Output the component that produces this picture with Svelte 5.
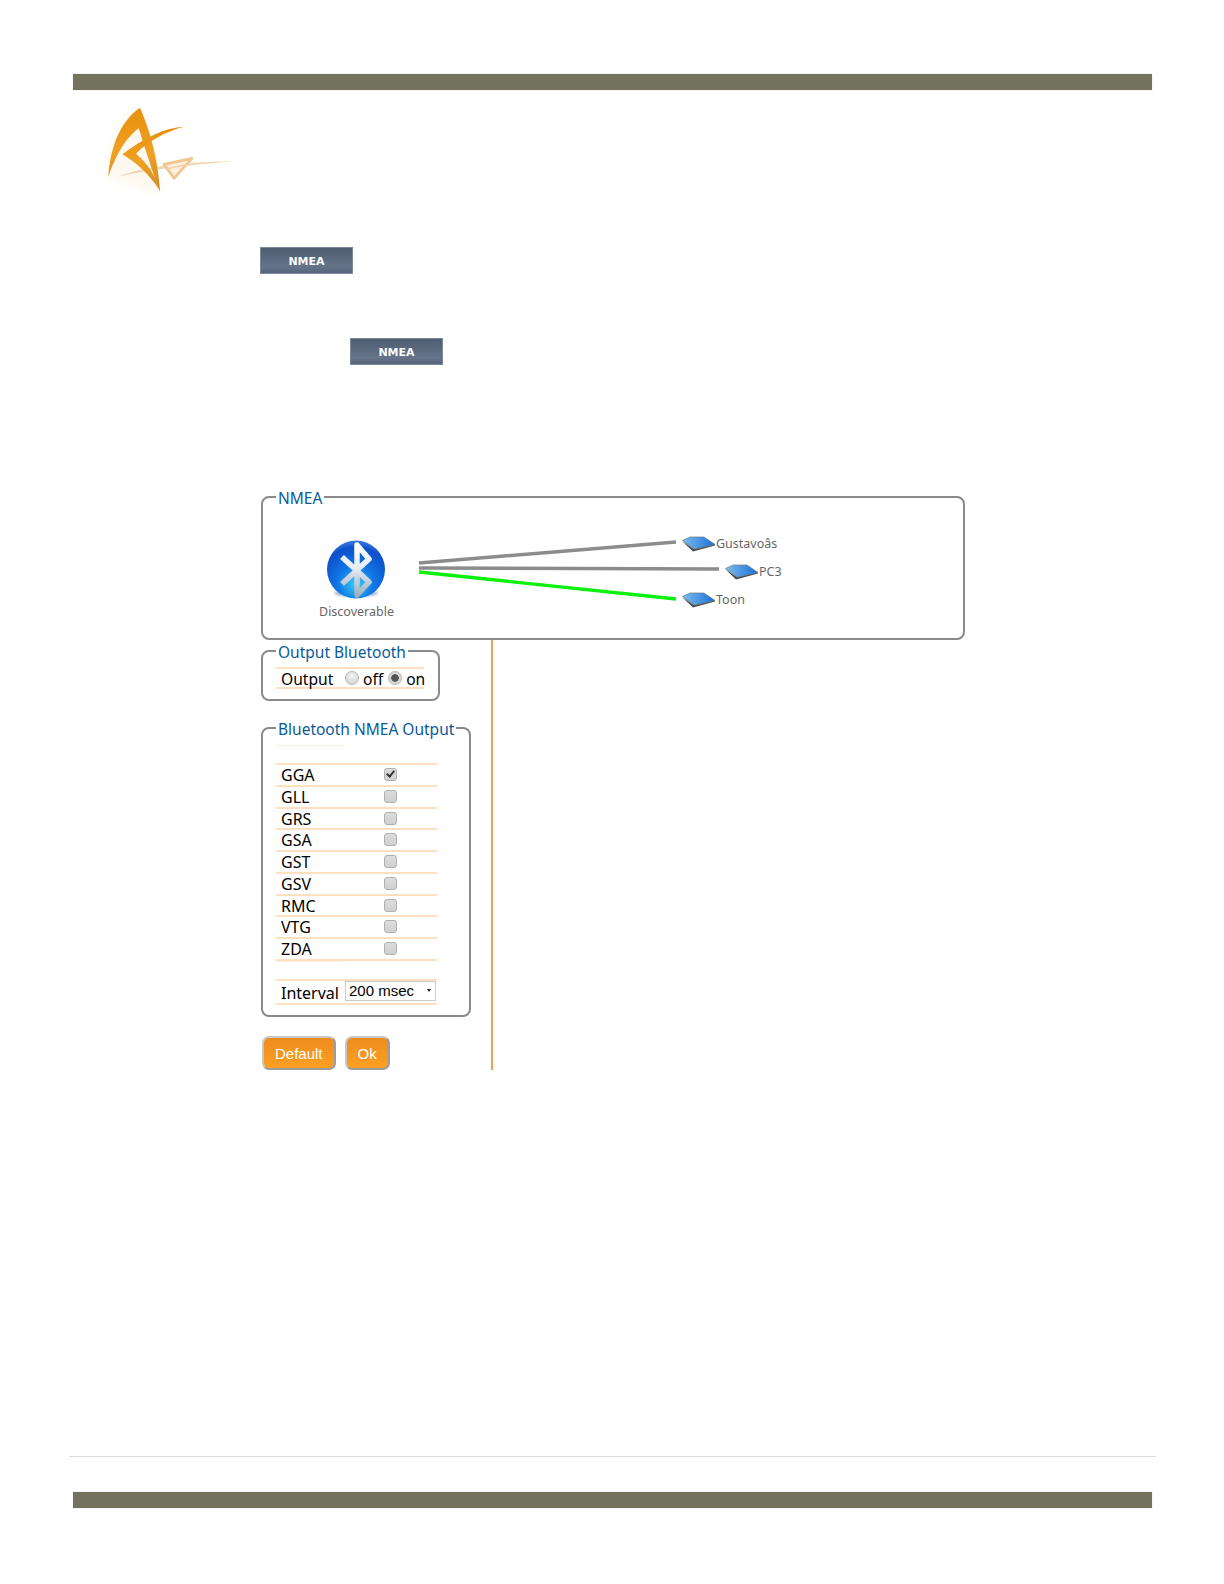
<script lang="ts">
  const sentences = ['GGA', 'GLL', 'GRS', 'GSA', 'GST', 'GSV', 'RMC', 'VTG', 'ZDA'];
  const enabled = ['GGA'];

  // diagram canvas is relative to the NMEA fieldset's inner box
  const devices = [
    { name: 'Gustavoâs', x: 406, y: 36 },
    { name: 'PC3', x: 449, y: 64 },
    { name: 'Toon', x: 406, y: 92 }
  ];
  const links = [
    { x1: 143, y1: 54, x2: 400, y2: 33, color: '#8c8c8c' },
    { x1: 143, y1: 59, x2: 443, y2: 60, color: '#8c8c8c' },
    { x1: 143, y1: 63, x2: 400, y2: 90, color: '#0cf00c' }
  ];
</script>

<div class="page">
  <div class="bar"></div>

  <svg class="logo" viewBox="0 0 480 330" width="160" height="110" aria-label="logo">
    <defs>
      <filter id="soft"><feGaussianBlur stdDeviation="1.8" /></filter>
      <filter id="haze"><feGaussianBlur stdDeviation="10" /></filter>
      <linearGradient id="gold" x1="0" y1="0" x2="0" y2="1">
        <stop offset="0" stop-color="#e8900e" />
        <stop offset="0.55" stop-color="#f0a024" />
        <stop offset="1" stop-color="#cf8a22" />
      </linearGradient>
    </defs>
    <g filter="url(#haze)" opacity="0.2">
      <path d="M150 30 C90 70 50 150 50 250 L215 300 C205 200 185 110 150 30Z" fill="#fbe3b8" />
    </g>
    <g filter="url(#soft)">
      <path d="M85 245 C170 210 300 202 432 198 C300 212 180 222 85 245Z" fill="#f0d8b6" />
      <path d="M306 190 L222 208 L252 250 Z" fill="#fbeedd" stroke="#f0c68e" stroke-width="8" stroke-linejoin="round" />
      <path d="M226 222 L296 208" stroke="#f0d0a4" stroke-width="4" />
      <path d="M150 38 C100 72 62 140 55 245 C80 172 112 125 146 100 C162 150 185 225 210 290 C206 215 188 125 150 38Z" fill="url(#gold)" />
      <path d="M282 95 C225 98 165 126 97 178 C142 205 180 240 210 288 C196 238 172 205 138 176 C172 140 225 110 282 95Z" fill="url(#gold)" />
    </g>
  </svg>

  <div class="tab first">NMEA</div>
  <div class="tab second">NMEA</div>

  <main class="content">
    <fieldset class="box diagram">
      <legend>NMEA</legend>
      <div class="canvas">
        <svg class="links" width="690" height="120" aria-hidden="true">
          {#each links as l}
            <line x1={l.x1} y1={l.y1} x2={l.x2} y2={l.y2} stroke={l.color} stroke-width="3.4" />
          {/each}
        </svg>

        <div class="hub">
          <svg viewBox="0 0 120 80" width="120" height="80" aria-hidden="true">
            <defs>
              <radialGradient id="ball" cx="0.5" cy="0.75" r="0.75">
                <stop offset="0" stop-color="#37d0f7" />
                <stop offset="0.4" stop-color="#1079e6" />
                <stop offset="0.85" stop-color="#0d4fcb" />
                <stop offset="1" stop-color="#3c80e4" />
              </radialGradient>
              <linearGradient id="rune" x1="0" y1="0" x2="0" y2="1">
                <stop offset="0" stop-color="#ffffff" />
                <stop offset="0.45" stop-color="#e6ecf4" />
                <stop offset="1" stop-color="#9fb2c2" />
              </linearGradient>
              <filter id="shade"><feGaussianBlur stdDeviation="1.5" /></filter>
            </defs>
            <ellipse cx="56" cy="63" rx="22" ry="3.5" fill="#5d7ea8" opacity="0.6" filter="url(#shade)" />
            <circle cx="56" cy="39.5" r="29" fill="url(#ball)" />
            <path d="M42 27 L69 52 L57 65 L57 15 L69 29 L42 54" fill="none" stroke="url(#rune)" stroke-width="5.5" stroke-linejoin="round" />
          </svg>
          <span>Discoverable</span>
        </div>

        {#each devices as d}
          <div class="device" style="left: {d.x}px; top: {d.y}px">
            <svg viewBox="0 0 33 16" width="33" height="16" aria-hidden="true">
              <defs>
                <linearGradient id="screen-{d.name}" x1="0" y1="0" x2="1" y2="0">
                  <stop offset="0" stop-color="#7fbcec" />
                  <stop offset="1" stop-color="#1670d8" />
                </linearGradient>
              </defs>
              <path d="M0 5 L11 15.5 L33 9.5 L33 8 L12 13 Z" fill="#4e4e4e" />
              <path d="M0.5 4.5 L8 1 L22 1 L33 8.5 L12 13 Z" fill="url(#screen-{d.name})" stroke="#6a7884" stroke-width="0.7" />
            </svg>
            <span>{d.name}</span>
          </div>
        {/each}
      </div>
    </fieldset>

    <div class="lower">
      <fieldset class="box output">
        <legend>Output Bluetooth</legend>
        <div class="output-row">
          <span class="output-label">Output</span>
          <label class="choice"><input type="radio" name="bt" /> off</label>
          <label class="choice"><input type="radio" name="bt" checked /> on</label>
        </div>
      </fieldset>

      <fieldset class="box sentences">
        <legend>Bluetooth NMEA Output</legend>
        <div class="grid">
          <div class="cell spacer"></div>
          <div class="cell blank"></div>
          {#each sentences as s}
            <div class="cell name">{s}</div>
            <div class="cell check"><input type="checkbox" checked={enabled.includes(s)} /></div>
          {/each}
          <div class="cell spacer"></div>
          <div class="cell blank"></div>
          <div class="cell name interval">Interval</div>
          <div class="cell interval">
            <span class="select">
              <select>
                <option>200 msec</option>
                <option>500 msec</option>
                <option>1000 msec</option>
              </select>
            </span>
          </div>
        </div>
      </fieldset>

      <div class="actions">
        <button type="button">Default</button>
        <button type="button">Ok</button>
      </div>
    </div>
  </main>

  <footer>
    <div class="rule"></div>
    <div class="bar"></div>
  </footer>
</div>

<style>
  :global(body) {
    margin: 0;
    background: #fff;
  }

  .page {
    width: 1224px;
    height: 1584px;
    box-sizing: border-box;
    padding-top: 74px;
    font-family: Tahoma, "Noto Sans", sans-serif;
    color: #000;
    overflow: hidden;
  }

  .bar {
    height: 16px;
    margin: 0 72px 0 73px;
    background: #73735d;
    box-shadow: 0 0 1px #c9c9b4;
  }

  .logo {
    display: block;
    margin: 5px 0 0 90px;
  }

  .tab {
    width: 93px;
    height: 27px;
    box-sizing: border-box;
    display: flex;
    align-items: center;
    justify-content: center;
    padding-top: 2px;
    border: 1px solid #7d8a9b;
    background: linear-gradient(#4f5d70, #65748a 75%, #55647a);
    color: #fff;
    font: bold 11px "DejaVu Sans", sans-serif;
  }

  .tab.first {
    margin: 42px 0 0 260px;
  }

  .tab.second {
    margin: 64px 0 0 350px;
  }

  .content {
    margin: 119px 0 0 261px;
  }

  .box {
    margin: 0;
    padding: 0 11px 0 13px;
    border: 2px solid #8a8a8a;
    border-radius: 8px;
    box-sizing: border-box;
  }

  legend {
    margin-left: 0;
    padding: 2px 2px 0;
    color: #0a5a9a;
    font-size: 15.5px;
    line-height: 22px;
    white-space: nowrap;
  }

  .diagram {
    width: 704px;
    height: 156px;
  }

  /* NMEA sits one pixel lower on its border than the two smaller legends */
  .diagram legend {
    padding-top: 3px;
  }

  .canvas {
    position: relative;
    height: 120px;
  }

  .links {
    position: absolute;
    left: 0;
    top: 0;
  }

  .hub {
    position: absolute;
    left: 24px;
    top: 21px;
    width: 112px;
    color: #666;
    font-size: 12.5px;
    text-align: center;
  }

  .hub svg {
    display: block;
    margin-bottom: -7px;
  }

  .hub span {
    display: block;
    padding-left: 1px;
  }

  .device {
    position: absolute;
    display: flex;
    align-items: center;
    gap: 1px;
    transform: translateY(-9px);
    color: #666;
    font-size: 12.5px;
    line-height: 16px;
  }

  .device svg {
    flex: none;
  }

  .lower {
    width: 232px;
    height: 430px;
    box-sizing: border-box;
    border-right: 2px solid #ee9f55;
    padding-top: 1px;
  }

  .output {
    width: 179px;
    height: 62px;
    margin-top: -2px;
  }

  .output-row {
    display: flex;
    align-items: center;
    height: 22px;
    margin-top: 4px;
    width: 148px;
    padding: 2px 0 0 5px;
    box-sizing: border-box;
    border-top: 2px solid #fde0c0;
    border-bottom: 2px solid #fde0c0;
    font-size: 15.6px;
  }

  .output-label {
    width: 64px;
    flex: none;
  }

  .choice {
    display: flex;
    align-items: center;
    gap: 4px;
    margin-right: 5px;
    white-space: nowrap;
  }

  input[type='radio'] {
    appearance: none;
    width: 14px;
    height: 14px;
    margin: 0 0 2px;
    border: 1px solid #b4b4b4;
    border-radius: 50%;
    background: radial-gradient(circle at 50% 30%, #f2f2f2, #d0d0d0);
    box-sizing: border-box;
  }

  input[type='radio']:checked {
    background: radial-gradient(circle, #555 0 3.5px, #d8d8d8 4px);
  }

  .sentences {
    width: 210px;
    height: 301px;
    margin-top: 15px;
  }

  .grid {
    display: grid;
    grid-template-columns: 69px 92px;
    margin-top: 5px;
  }

  .cell {
    height: 21.75px;
    box-sizing: border-box;
    border-bottom: 2px solid #fde0c0;
    font-size: 16px;
  }

  .name {
    padding-left: 5px;
    line-height: 20px;
  }

  .spacer {
    height: 20px;
    border-top: 1px solid #fdf0e2;
    border-bottom: 2px solid #fde0c0;
  }

  .blank {
    height: 20px;
    border-bottom: 2px solid #fde0c0;
  }

  .check {
    padding-left: 39px;
  }

  input[type='checkbox'] {
    appearance: none;
    position: relative;
    display: block;
    width: 13px;
    height: 13px;
    margin: 3px 0 0;
    border: 1px solid #b0b0b0;
    border-radius: 3px;
    background: linear-gradient(#dcdcdc, #d0d0d0);
    box-sizing: border-box;
  }

  input[type='checkbox']:checked::after {
    content: '';
    position: absolute;
    left: 3px;
    top: 0;
    width: 3px;
    height: 6px;
    border: solid #333;
    border-width: 0 2px 2px 0;
    transform: rotate(40deg);
  }

  .interval {
    height: 24px;
    line-height: 25px;
  }

  .select {
    position: relative;
    display: block;
    width: 91px;
    height: 20px;
  }

  .select::after {
    content: '';
    position: absolute;
    right: 5px;
    top: 8px;
    border: 2px solid transparent;
    border-top: 3px solid #222;
    border-bottom: 0;
  }

  select {
    appearance: none;
    display: block;
    width: 100%;
    height: 100%;
    box-sizing: border-box;
    padding: 0 3px;
    border: 1px solid #ccc;
    border-radius: 0;
    background: #fff;
    color: #000;
    font: 15px/17px "Liberation Sans", sans-serif;
  }

  .actions {
    display: flex;
    gap: 9px;
    margin-top: 19px;
    margin-left: 1px;
  }

  button {
    height: 34px;
    padding: 0 11px;
    border: 2px solid #c8c8c8;
    border-right-color: #9c9c9c;
    border-bottom-color: #9c9c9c;
    border-radius: 7px;
    background: linear-gradient(#ec8c1e, #fca023);
    color: #fff;
    font: 15px "Liberation Sans", sans-serif;
  }

  footer {
    margin-top: 386px;
  }

  .rule {
    height: 1px;
    margin: 0 68px 0 69px;
    background: #dcdcdc;
  }

  footer .bar {
    margin-top: 35px;
  }
</style>
